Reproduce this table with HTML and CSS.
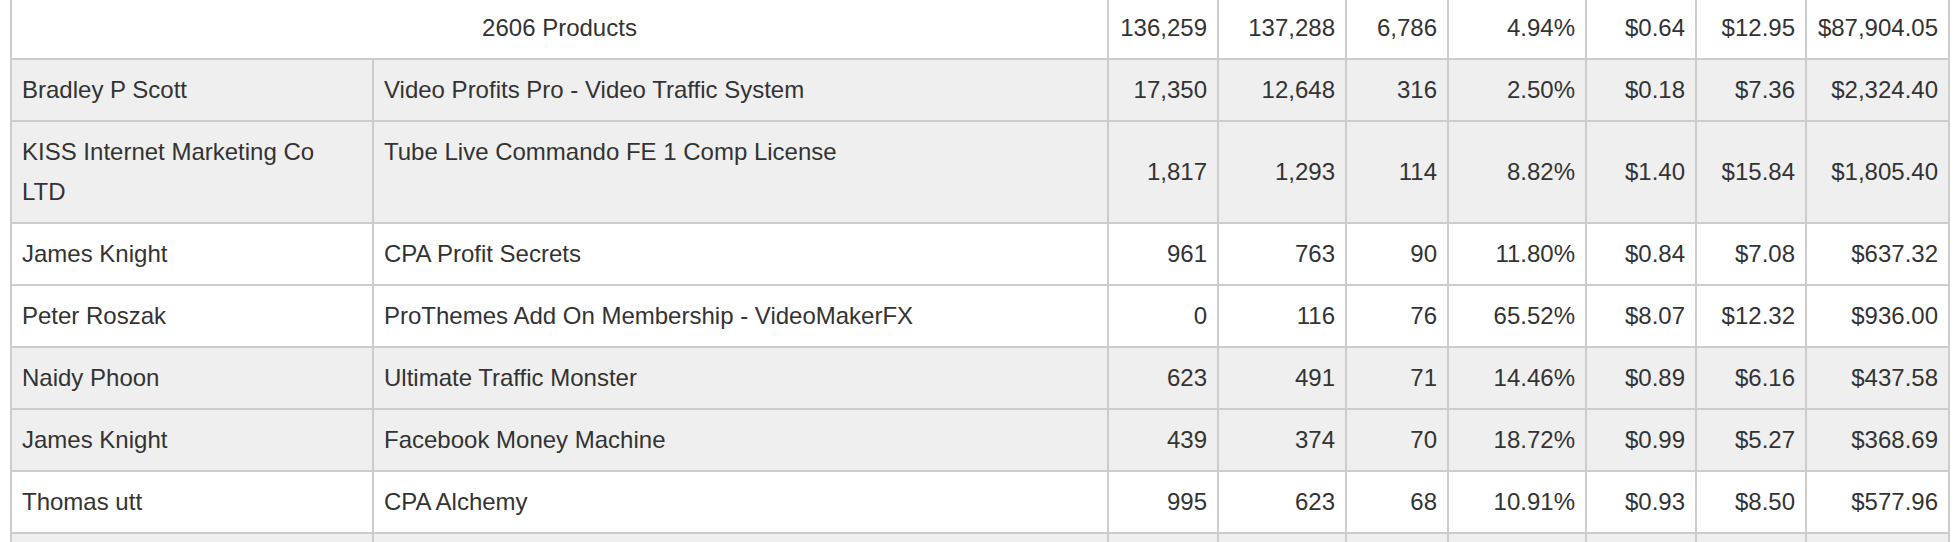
FILE: index.html
```html
<!DOCTYPE html>
<html lang="en">
<head>
<meta charset="utf-8">
<title>Products</title>
<link rel="stylesheet" href="styles.css">
</head>
<body>
<div class="wrap">
<table class="grid">
  <colgroup>
    <col class="c-vendor">
    <col class="c-product">
    <col class="c-n1">
    <col class="c-n2">
    <col class="c-n3">
    <col class="c-pct">
    <col class="c-m1">
    <col class="c-m2">
    <col class="c-total">
  </colgroup>
  <tbody>
    <tr class="white">
      <td colspan="2" class="center">2606 Products</td>
      <td class="num">136,259</td><td class="num">137,288</td><td class="num">6,786</td><td class="num">4.94%</td><td class="num">$0.64</td><td class="num">$12.95</td><td class="num">$87,904.05</td>
    </tr>
    <tr class="gray">
      <td>Bradley P Scott</td><td>Video Profits Pro - Video Traffic System</td>
      <td class="num">17,350</td><td class="num">12,648</td><td class="num">316</td><td class="num">2.50%</td><td class="num">$0.18</td><td class="num">$7.36</td><td class="num">$2,324.40</td>
    </tr>
    <tr class="gray">
      <td>KISS Internet Marketing Co LTD</td><td>Tube Live Commando FE 1 Comp License</td>
      <td class="num">1,817</td><td class="num">1,293</td><td class="num">114</td><td class="num">8.82%</td><td class="num">$1.40</td><td class="num">$15.84</td><td class="num">$1,805.40</td>
    </tr>
    <tr class="white">
      <td>James Knight</td><td>CPA Profit Secrets</td>
      <td class="num">961</td><td class="num">763</td><td class="num">90</td><td class="num">11.80%</td><td class="num">$0.84</td><td class="num">$7.08</td><td class="num">$637.32</td>
    </tr>
    <tr class="white">
      <td>Peter Roszak</td><td>ProThemes Add On Membership - VideoMakerFX</td>
      <td class="num">0</td><td class="num">116</td><td class="num">76</td><td class="num">65.52%</td><td class="num">$8.07</td><td class="num">$12.32</td><td class="num">$936.00</td>
    </tr>
    <tr class="gray">
      <td>Naidy Phoon</td><td>Ultimate Traffic Monster</td>
      <td class="num">623</td><td class="num">491</td><td class="num">71</td><td class="num">14.46%</td><td class="num">$0.89</td><td class="num">$6.16</td><td class="num">$437.58</td>
    </tr>
    <tr class="gray">
      <td>James Knight</td><td>Facebook Money Machine</td>
      <td class="num">439</td><td class="num">374</td><td class="num">70</td><td class="num">18.72%</td><td class="num">$0.99</td><td class="num">$5.27</td><td class="num">$368.69</td>
    </tr>
    <tr class="white">
      <td>Thomas utt</td><td>CPA Alchemy</td>
      <td class="num">995</td><td class="num">623</td><td class="num">68</td><td class="num">10.91%</td><td class="num">$0.93</td><td class="num">$8.50</td><td class="num">$577.96</td>
    </tr>
    <tr class="gray">
      <td>&nbsp;</td><td>&nbsp;</td>
      <td class="num">&nbsp;</td><td class="num">&nbsp;</td><td class="num">&nbsp;</td><td class="num">&nbsp;</td><td class="num">&nbsp;</td><td class="num">&nbsp;</td><td class="num">&nbsp;</td>
    </tr>
  </tbody>
</table>
</div>
</body>
</html>
```
FILE: styles.css
```css
html, body {
  margin: 0;
  padding: 0;
  background: #ffffff;
}

.wrap {
  padding-left: 10px;
}

.grid {
  margin-top: -4px;
  width: 1940px;
  table-layout: fixed;
  border-collapse: collapse;
  font-family: "Liberation Sans", Arial, Helvetica, sans-serif;
  font-size: 24px;
  line-height: 40px;
  color: #333333;
}

.grid td {
  border: 2px solid #cccccc;
  padding: 10px;
  vertical-align: top;
  text-align: left;
}

.grid td.num {
  text-align: right;
  vertical-align: middle;
}

.grid td.center {
  text-align: center;
  vertical-align: middle;
}

.grid tr.gray td { background: #efefef; }
.grid tr.white td { background: #ffffff; }

.c-vendor { width: 362px; }
.c-product { width: 735px; }
.c-n1 { width: 110px; }
.c-n2 { width: 128px; }
.c-n3 { width: 102px; }
.c-pct { width: 138px; }
.c-m1 { width: 110px; }
.c-m2 { width: 110px; }
.c-total { width: 143px; }
```
